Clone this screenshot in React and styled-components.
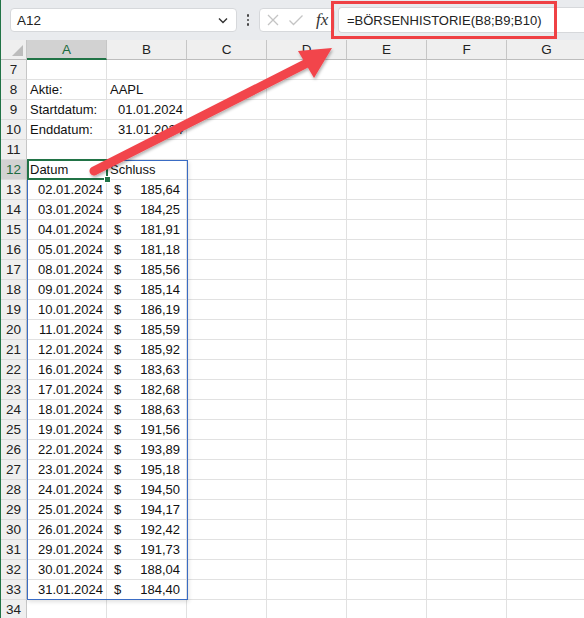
import React from 'react';
import styled, { createGlobalStyle } from 'styled-components';

const GlobalStyle = createGlobalStyle`
    html, body {
        margin: 0;
        padding: 0;
        background: #ffffff;
        overflow: hidden;
    }
    body {
        font-family: "Liberation Sans", Arial, sans-serif;
    }
`;

const Page = styled.div`
    position: relative;
    width: 584px;
    height: 618px;
    overflow: hidden;
    border-left: 1px solid #217346;
    box-sizing: border-box;
`;

const TopBar = styled.div`
    display: flex;
    align-items: center;
    height: 40px;
    padding-left: 9px;
    background: #e9ebee;
    box-sizing: border-box;
`;

const NameBox = styled.div`
    display: flex;
    align-items: center;
    justify-content: space-between;
    width: 227px;
    height: 24px;
    padding: 0 6px 0 6px;
    box-sizing: border-box;
    background: #ffffff;
    border: 1px solid #d6d8db;
    border-radius: 4px;
    font-size: 13.5px;
    color: #222;
`;

const Dots = styled.div`
    display: flex;
    flex-direction: column;
    gap: 2px;
    width: 22px;
    align-items: center;
    span {
        width: 2.5px;
        height: 2.5px;
        background: #444;
        border-radius: 50%;
    }
`;

const IconBox = styled.div`
    display: flex;
    align-items: center;
    gap: 8px;
    width: 76px;
    height: 24px;
    padding-left: 6px;
    box-sizing: border-box;
    background: #ffffff;
    border: 1px solid #d6d8db;
    border-radius: 4px;
`;

const Fx = styled.span`
    font-family: "Liberation Serif", "Times New Roman", serif;
    font-style: italic;
    font-size: 17px;
    color: #333;
    margin-left: 4px;
`;

const FormulaInput = styled.div`
    display: flex;
    align-items: center;
    flex: 1;
    height: 24px;
    margin-left: 3px;
    padding-left: 8px;
    background: #ffffff;
    border: 1px solid #d6d8db;
    border-right: none;
    border-radius: 4px 0 0 4px;
    font-size: 13px;
    color: #222;
`;

const Sheet = styled.div`
    position: relative;
    display: grid;
    grid-template-columns: 26px repeat(7, 80px);
    grid-auto-rows: 20px;
`;

const Corner = styled.div`
    position: relative;
    background: #efefef;
    border-right: 1px solid #c6c6c6;
    border-bottom: 1px solid #bdbdbd;
    box-sizing: border-box;
    &::after {
        content: "";
        position: absolute;
        right: 3px;
        bottom: 3px;
        border-style: solid;
        border-width: 0 0 11px 11px;
        border-color: transparent transparent #bcbcbc transparent;
    }
`;

const ColHead = styled.div`
    display: flex;
    align-items: center;
    justify-content: center;
    font-size: 13.5px;
    color: ${p => (p.$active ? '#1d6b40' : '#222')};
    background: ${p => (p.$active ? '#d2d2d2' : '#efefef')};
    border-right: 1px solid #c6c6c6;
    border-bottom: ${p => (p.$active ? '2px solid #217346' : '1px solid #bdbdbd')};
    box-sizing: border-box;
`;

const RowHead = styled.div`
    display: flex;
    align-items: center;
    justify-content: center;
    font-size: 13.5px;
    color: ${p => (p.$active ? '#1d6b40' : '#222')};
    background: ${p => (p.$active ? '#d2d2d2' : '#efefef')};
    border-right: 1px solid #c6c6c6;
    border-bottom: 1px solid #dcdcdc;
    box-sizing: border-box;
`;

const Cell = styled.div`
    display: flex;
    align-items: center;
    justify-content: ${p => (p.$right ? 'flex-end' : 'flex-start')};
    padding: 0 3px 0 3px;
    font-size: 13px;
    color: #111;
    white-space: nowrap;
    background: #ffffff;
    border-right: 1px solid #e1e1e1;
    border-bottom: 1px solid #e1e1e1;
    box-sizing: border-box;
`;

const MoneyCell = styled(Cell)`
    justify-content: space-between;
    padding: 0 6px 0 7px;
`;

const Selection = styled.div`
    position: absolute;
    left: 26px;
    top: 119px;
    width: 81px;
    height: 21px;
    border: 2px solid #217346;
    box-sizing: border-box;
    pointer-events: none;
    &::after {
        content: "";
        position: absolute;
        right: -5px;
        bottom: -5px;
        width: 5px;
        height: 5px;
        background: #217346;
        border: 1px solid #ffffff;
    }
`;

const SpillRange = styled.div`
    position: absolute;
    left: 26px;
    top: 120px;
    width: 161px;
    height: 440px;
    border: 1px solid #3a6cc4;
    box-sizing: border-box;
    box-shadow: 1px 2px 4px rgba(0, 0, 0, 0.12);
    pointer-events: none;
`;

const Highlight = styled.div`
    position: absolute;
    left: 330px;
    top: 1px;
    width: 226px;
    height: 38px;
    border: 3px solid #ef4145;
    box-sizing: border-box;
    pointer-events: none;
`;

const ArrowLayer = styled.svg`
    position: absolute;
    left: 0;
    top: 0;
    pointer-events: none;
`;

const columns = ['A', 'B', 'C', 'D', 'E', 'F', 'G'];

const prices = [
    ['02.01.2024', '185,64'],
    ['03.01.2024', '184,25'],
    ['04.01.2024', '181,91'],
    ['05.01.2024', '181,18'],
    ['08.01.2024', '185,56'],
    ['09.01.2024', '185,14'],
    ['10.01.2024', '186,19'],
    ['11.01.2024', '185,59'],
    ['12.01.2024', '185,92'],
    ['16.01.2024', '183,63'],
    ['17.01.2024', '182,68'],
    ['18.01.2024', '188,63'],
    ['19.01.2024', '191,56'],
    ['22.01.2024', '193,89'],
    ['23.01.2024', '195,18'],
    ['24.01.2024', '194,50'],
    ['25.01.2024', '194,17'],
    ['26.01.2024', '192,42'],
    ['29.01.2024', '191,73'],
    ['30.01.2024', '188,04'],
    ['31.01.2024', '184,40'],
];

function cellsFor(row) {
    const top = {
        8: [{ v: 'Aktie:' }, { v: 'AAPL' }],
        9: [{ v: 'Startdatum:' }, { v: '01.01.2024', right: true }],
        10: [{ v: 'Enddatum:' }, { v: '31.01.2024', right: true }],
        12: [{ v: 'Datum' }, { v: 'Schluss' }],
    };
    if (top[row]) return top[row];
    if (row >= 13 && row <= 33) {
        const [d, p] = prices[row - 13];
        return [{ v: d, right: true }, { money: p }];
    }
    return [];
}

function Chevron() {
    return (
        <svg width="14" height="14" viewBox="0 0 14 14">
            <path d="M3 5.5 L7 9.5 L11 5.5" fill="none" stroke="#333" strokeWidth="1.4" />
        </svg>
    );
}

function Cross() {
    return (
        <svg width="14" height="14" viewBox="0 0 14 14">
            <path d="M2 2 L12 12 M12 2 L2 12" stroke="#c4c4c4" strokeWidth="1.3" />
        </svg>
    );
}

function Check() {
    return (
        <svg width="16" height="14" viewBox="0 0 16 14">
            <path d="M1.5 7.5 L5.5 11.5 L14.5 2.5" fill="none" stroke="#c4c4c4" strokeWidth="1.3" />
        </svg>
    );
}

export default function App() {
    const rows = [];
    for (let r = 7; r <= 34; r++) rows.push(r);

    return (
        <>
            <GlobalStyle />
            <Page>
                <TopBar>
                    <NameBox>
                        <span>A12</span>
                        <Chevron />
                    </NameBox>
                    <Dots><span /><span /><span /></Dots>
                    <IconBox>
                        <Cross />
                        <Check />
                        <Fx>fx</Fx>
                    </IconBox>
                    <FormulaInput>=BÖRSENHISTORIE(B8;B9;B10)</FormulaInput>
                </TopBar>
                <Sheet>
                    <Corner />
                    {columns.map(c => (
                        <ColHead key={c} $active={c === 'A'}>{c}</ColHead>
                    ))}
                    {rows.map(r => {
                        const data = cellsFor(r);
                        return (
                            <React.Fragment key={r}>
                                <RowHead $active={r === 12}>{r}</RowHead>
                                {columns.map((c, i) => {
                                    const d = data[i];
                                    if (d && d.money) {
                                        return (
                                            <MoneyCell key={c}>
                                                <span>$</span>
                                                <span>{d.money}</span>
                                            </MoneyCell>
                                        );
                                    }
                                    return (
                                        <Cell key={c} $right={d && d.right}>
                                            {d ? d.v : ''}
                                        </Cell>
                                    );
                                })}
                            </React.Fragment>
                        );
                    })}
                    <SpillRange />
                    <Selection />
                </Sheet>
                <Highlight />
                <ArrowLayer width="584" height="618" viewBox="0 0 584 618">
                    <defs>
                        <filter id="shadow" x="-10%" y="-10%" width="130%" height="130%">
                            <feDropShadow dx="1" dy="2" stdDeviation="1.5" floodColor="#000" floodOpacity="0.3" />
                        </filter>
                    </defs>
                    <g filter="url(#shadow)" fill="#f2444b" stroke="none">
                        <line x1="93" y1="171" x2="310" y2="61" stroke="#f2444b" strokeWidth="9" strokeLinecap="round" />
                        <polygon points="331,48 297,51 313,78" />
                    </g>
                </ArrowLayer>
            </Page>
        </>
    );
}
